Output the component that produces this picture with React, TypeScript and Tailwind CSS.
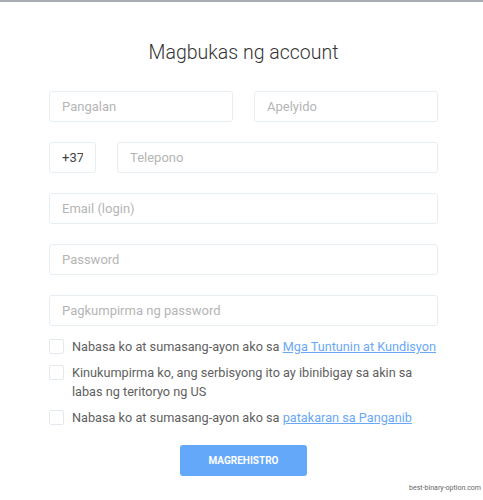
import { useState } from "react"

const inputCls =
  "h-[31px] w-full rounded-[3px] border border-[#e6eef4] bg-white px-3 text-[13px] text-[#444] placeholder:text-[#b5b5b5] outline-none"

const Check = ({ children }: { children: React.ReactNode }) => {
  const [on, setOn] = useState(false)
  return (
    <label className="flex items-start gap-2 cursor-pointer">
      <span
        onClick={() => setOn(!on)}
        className={`mt-[2px] h-[15px] w-[15px] shrink-0 rounded-[2px] border border-[#e3e9ee] ${on ? "bg-[#64a8fa]" : "bg-white"}`}
      />
      <span className="text-[12.7px] leading-[19px] text-[#606060]">{children}</span>
    </label>
  )
}

export default function App() {
  return (
    <div
      className="relative h-[500px] w-[483px] overflow-hidden bg-white"
      style={{ fontFamily: "Roboto, 'Noto Sans', sans-serif" }}
    >
      <div className="h-[2px] w-full bg-[#a9adb3]" />

      <div className="ml-[49px] w-[389px] pt-[38px]">
        <h1 className="text-center text-[19.5px] font-light leading-[26px] text-[#333]">
          Magbukas ng account
        </h1>

        <div className="mt-[25px] flex flex-col gap-[20px]">
          <div className="flex gap-[21px]">
            <input className={inputCls} placeholder="Pangalan" />
            <input className={inputCls} placeholder="Apelyido" />
          </div>
          <div className="flex gap-[21px]">
            <input className={inputCls + " !w-[47px] shrink-0"} defaultValue="+37" />
            <input className={inputCls} placeholder="Telepono" />
          </div>
          <input className={inputCls} placeholder="Email (login)" />
          <input className={inputCls} type="password" placeholder="Password" />
          <input className={inputCls} type="password" placeholder="Pagkumpirma ng password" />
        </div>

        <div className="mt-[11px] flex flex-col gap-[7px]">
          <Check>
            Nabasa ko at sumasang-ayon ako sa{" "}
            <a className="text-[#6aa8f7] underline" href="#">Mga Tuntunin at Kundisyon</a>
          </Check>
          <Check>
            Kinukumpirma ko, ang serbisyong ito ay ibinibigay sa akin sa labas ng teritoryo ng US
          </Check>
          <Check>
            Nabasa ko at sumasang-ayon ako sa{" "}
            <a className="text-[#6aa8f7] underline" href="#">patakaran sa Panganib</a>
          </Check>
        </div>

        <div className="mt-[18px] flex justify-center">
          <button className="h-[31px] w-[127px] rounded-[3px] bg-[#64a8fa] text-[10px] font-bold text-white">
            MAGREHISTRO
          </button>
        </div>
      </div>

      <div className="absolute bottom-[7px] right-[2px] text-[7px] text-[#666]">
        best-binary-option.com
      </div>
    </div>
  )
}
